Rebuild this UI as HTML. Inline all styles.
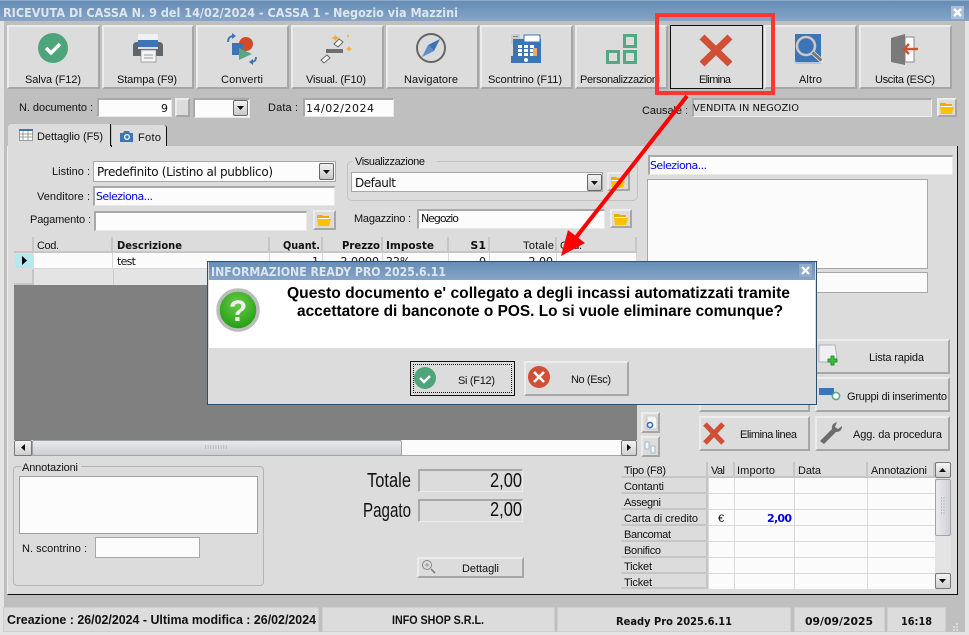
<!DOCTYPE html>
<html><head><meta charset="utf-8"><title>Ricevuta di cassa</title>
<style>
html,body{margin:0;padding:0;width:969px;height:635px;overflow:hidden;background:#bfbfbf}
.l{position:absolute;left:0;top:0;width:969px;height:635px}
.d{position:absolute;box-sizing:border-box}
.b{background:#dcdcdc;border:2px solid;border-color:#ececec #a6a6a6 #a6a6a6 #ececec}
.i{background:#fcfcfc;border:1px solid #a8a8a8;border-bottom-color:#e8e8e8;border-right-color:#e8e8e8;border-top-width:2px;border-left-width:2px}
.g{background:#dcdcdc;border:1px solid #a8a8a8;border-bottom-color:#ececec;border-right-color:#ececec;border-top-width:2px;border-left-width:2px}
.h{background:#dcdcdc;border-right:2px solid #c6c6c6;border-bottom:2px solid #c6c6c6}
.c{background:#fbfbfb;border-right:1px solid #d8d8d8;border-bottom:1px solid #d8d8d8}
svg{position:absolute;left:0;top:0}
text{font-family:"Liberation Sans",sans-serif;font-size:11px;fill:#111}
.v{font-family:"DejaVu Sans",sans-serif;font-size:11px}
.vb{font-family:"DejaVu Sans",sans-serif;font-size:11px;font-weight:bold}
.t{font-family:"DejaVu Sans",sans-serif;font-weight:bold;font-size:12px;fill:#dde5ef}
.m{font-family:"Liberation Sans",sans-serif;font-weight:bold;font-size:16px;fill:#000}
.big{font-size:20px}
.bl{fill:#0000ee}
.e{text-anchor:end}
</style></head><body>
<div class="l">
<!-- titlebar -->
<div class="d" style="left:0;top:0;width:969px;height:21px;background:linear-gradient(#668db6,#86a5c7);border-top:1px solid #8fa9c6"></div>
<div class="d" style="left:0;top:21px;width:969px;height:614px;background:#bfbfbf;border-left:4px solid #e4e4e4;border-right:4px solid #e4e4e4;border-bottom:3px solid #e4e4e4"></div>
<div class="d" style="left:951px;top:6px;width:13px;height:13px;background:#a9bfd8"></div>
<!-- toolbar buttons -->
<div class="d b" style="left:7px;top:25px;width:93px;height:64px"></div>
<div class="d b" style="left:102px;top:25px;width:92px;height:64px"></div>
<div class="d b" style="left:196px;top:25px;width:93px;height:64px"></div>
<div class="d b" style="left:291px;top:25px;width:93px;height:64px"></div>
<div class="d b" style="left:386px;top:25px;width:93px;height:64px"></div>
<div class="d b" style="left:480px;top:25px;width:93px;height:64px"></div>
<div class="d b" style="left:575px;top:25px;width:93px;height:64px"></div>
<div class="d" style="left:670px;top:25px;width:93px;height:64px;background:#dcdcdc;border:1px solid #111"></div>
<div class="d b" style="left:764px;top:25px;width:93px;height:64px"></div>
<div class="d b" style="left:859px;top:25px;width:93px;height:64px"></div>
<!-- top fields -->
<div class="d i" style="left:97px;top:98px;width:75px;height:19px"></div>
<div class="d b" style="left:175px;top:98px;width:15px;height:19px"></div>
<div class="d i" style="left:193px;top:98px;width:57px;height:20px"></div>
<div class="d b" style="left:233px;top:100px;width:15px;height:16px;border:1px solid #666;border-radius:2px;background:linear-gradient(#f2f2f2,#c8c8c8)"></div>
<div class="d i" style="left:303px;top:98px;width:91px;height:19px"></div>
<div class="d g" style="left:692px;top:98px;width:240px;height:19px"></div>
<div class="d b" style="left:937px;top:98px;width:20px;height:19px"></div>
<!-- panel -->
<div class="d" style="left:8px;top:124px;width:103px;height:23px;background:#dcdcdc;border-right:1px solid #111;border-radius:3px 0 0 0"></div>
<div class="d" style="left:112px;top:125px;width:55px;height:21px;background:#dcdcdc;border-right:1px solid #111;border-radius:0 3px 0 0"></div>
<div class="d" style="left:7px;top:146px;width:951px;height:449px;background:#dcdcdc;border-right:1px solid #111;border-bottom:1px solid #111;border-left:1px solid #ececec"></div>
<div class="d" style="left:7px;top:146px;width:1px;height:448px;background:#ececec"></div>
<div class="d" style="left:111px;top:145px;width:1px;height:2px;background:#111"></div>
<!-- form -->
<div class="d i" style="left:93px;top:161px;width:243px;height:21px;border-width:1px;border-color:#a8a8a8"></div>
<div class="d" style="left:319px;top:163px;width:15px;height:17px;border:1px solid #666;border-radius:2px;background:linear-gradient(#f2f2f2,#c8c8c8)"></div>
<div class="d i" style="left:93px;top:186px;width:242px;height:20px"></div>
<div class="d i" style="left:94px;top:211px;width:213px;height:20px"></div>
<div class="d b" style="left:313px;top:210px;width:23px;height:20px"></div>
<div class="d" style="left:347px;top:161px;width:291px;height:40px;border:1px solid #c2c2c2;border-radius:5px"></div>
<div class="d" style="left:353px;top:156px;width:84px;height:12px;background:#dcdcdc"></div>
<div class="d i" style="left:351px;top:172px;width:252px;height:20px;border-width:1px;border-color:#a8a8a8"></div>
<div class="d" style="left:587px;top:174px;width:15px;height:17px;border:1px solid #666;border-radius:2px;background:linear-gradient(#f2f2f2,#c8c8c8)"></div>
<div class="d b" style="left:607px;top:172px;width:23px;height:19px"></div>
<div class="d i" style="left:417px;top:209px;width:188px;height:20px"></div>
<div class="d b" style="left:610px;top:209px;width:22px;height:19px"></div>
<div class="d i" style="left:648px;top:155px;width:305px;height:20px"></div>
<div class="d" style="left:647px;top:179px;width:281px;height:90px;background:#fbfbfb;border:1px solid #a8a8a8"></div>
<div class="d" style="left:647px;top:272px;width:281px;height:21px;background:#fbfbfb;border:1px solid #a8a8a8"></div>
<!-- grid -->
<div class="d" style="left:14px;top:237px;width:623px;height:203px;background:#808080"></div>
<div class="d h" style="left:14px;top:237px;width:20px;height:16px"></div>
<div class="d h" style="left:34px;top:237px;width:79px;height:16px"></div>
<div class="d h" style="left:113px;top:237px;width:157px;height:16px"></div>
<div class="d h" style="left:270px;top:237px;width:53px;height:16px"></div>
<div class="d h" style="left:323px;top:237px;width:60px;height:16px"></div>
<div class="d h" style="left:383px;top:237px;width:66px;height:16px"></div>
<div class="d h" style="left:449px;top:237px;width:41px;height:16px"></div>
<div class="d h" style="left:490px;top:237px;width:67px;height:16px"></div>
<div class="d h" style="left:557px;top:237px;width:80px;height:16px"></div>
<div class="d" style="left:14px;top:253px;width:20px;height:16px;background:#b5e8ee;border:1px solid #ddd"></div>
<div class="d h" style="left:14px;top:269px;width:20px;height:16px"></div>
<div class="d c" style="left:34px;top:253px;width:79px;height:16px"></div>
<div class="d c" style="left:113px;top:253px;width:157px;height:16px"></div>
<div class="d c" style="left:270px;top:253px;width:53px;height:16px"></div>
<div class="d c" style="left:323px;top:253px;width:60px;height:16px"></div>
<div class="d c" style="left:383px;top:253px;width:66px;height:16px"></div>
<div class="d c" style="left:449px;top:253px;width:41px;height:16px"></div>
<div class="d c" style="left:490px;top:253px;width:67px;height:16px"></div>
<div class="d c" style="left:557px;top:253px;width:80px;height:16px"></div>
<div class="d" style="left:34px;top:269px;width:603px;height:16px;background:#e4e4e4"></div>
<div class="d" style="left:113px;top:269px;width:1px;height:16px;background:#ccc"></div>
<!-- grid scrollbar -->
<div class="d" style="left:14px;top:440px;width:623px;height:16px;background:#fbfbfb;border-bottom:1px solid #a8a8a8"></div>
<div class="d" style="left:14px;top:440px;width:18px;height:16px;border:1px solid #777;border-radius:2px;background:linear-gradient(#f2f2f2,#cfcfcf)"></div>
<div class="d" style="left:32px;top:440px;width:370px;height:16px;background:linear-gradient(#e8e8ec,#cdcfd4);border:1px solid #a2a2a6;border-radius:2px"></div>
<div class="d" style="left:621px;top:440px;width:16px;height:16px;border:1px solid #777;border-radius:2px;background:linear-gradient(#f2f2f2,#cfcfcf)"></div>
<!-- side buttons -->
<div class="d b" style="left:699px;top:339px;width:111px;height:35px"></div>
<div class="d b" style="left:699px;top:377px;width:111px;height:35px"></div>
<div class="d b" style="left:699px;top:416px;width:111px;height:35px"></div>
<div class="d b" style="left:815px;top:339px;width:135px;height:35px"></div>
<div class="d b" style="left:815px;top:377px;width:135px;height:35px"></div>
<div class="d b" style="left:815px;top:416px;width:135px;height:35px"></div>
<div class="d b" style="left:641px;top:412px;width:19px;height:21px"></div>
<div class="d b" style="left:641px;top:436px;width:19px;height:21px"></div>
<!-- bottom left -->
<div class="d" style="left:13px;top:466px;width:251px;height:120px;border:1px solid #b4b4b4;border-radius:4px"></div>
<div class="d" style="left:21px;top:460px;width:60px;height:12px;background:#dcdcdc"></div>
<div class="d" style="left:19px;top:476px;width:239px;height:58px;background:#fcfcfc;border:1px solid #a0a0a0"></div>
<div class="d" style="left:95px;top:537px;width:105px;height:21px;background:#fcfcfc;border:1px solid #a8a8a8"></div>
<div class="d g" style="left:418px;top:469px;width:105px;height:23px"></div>
<div class="d g" style="left:418px;top:499px;width:105px;height:23px"></div>
<div class="d b" style="left:417px;top:557px;width:107px;height:21px"></div>
<!-- payments table -->
<div class="d h" style="left:621px;top:462px;width:87px;height:16px"></div>
<div class="d h" style="left:708px;top:462px;width:27px;height:16px"></div>
<div class="d h" style="left:735px;top:462px;width:60px;height:16px"></div>
<div class="d h" style="left:795px;top:462px;width:73px;height:16px"></div>
<div class="d h" style="left:868px;top:462px;width:67px;height:16px"></div>
<div class="d h" style="left:621px;top:478px;width:87px;height:16px"></div>
<div class="d h" style="left:621px;top:494px;width:87px;height:16px"></div>
<div class="d h" style="left:621px;top:510px;width:87px;height:16px"></div>
<div class="d h" style="left:621px;top:526px;width:87px;height:16px"></div>
<div class="d h" style="left:621px;top:542px;width:87px;height:16px"></div>
<div class="d h" style="left:621px;top:558px;width:87px;height:16px"></div>
<div class="d h" style="left:621px;top:574px;width:87px;height:15px"></div>
<svg width="969" height="635">
<rect x="708" y="478" width="227" height="111" fill="#fbfbfb"/>
<g stroke="#dadada" stroke-width="1">
<path d="M708.5 478V589M734.5 478V589M794.5 478V589M867.5 478V589M708 493.5H935M708 509.5H935M708 525.5H935M708 541.5H935M708 557.5H935M708 573.5H935"/>
</g>
</svg>
<div class="d" style="left:935px;top:462px;width:16px;height:127px;background:#e4e4e4"></div>
<div class="d" style="left:935px;top:462px;width:16px;height:16px;border:1px solid #777;border-radius:2px;background:linear-gradient(#f4f4f4,#cfcfcf)"></div>
<div class="d" style="left:935px;top:479px;width:16px;height:57px;background:linear-gradient(90deg,#eaeaee,#cfd0d6);border:1px solid #a2a2a6;border-radius:2px"></div>
<div class="d" style="left:935px;top:573px;width:16px;height:16px;border:1px solid #777;border-radius:2px;background:linear-gradient(#f4f4f4,#cfcfcf)"></div>
<!-- status -->
<div class="d" style="left:3px;top:607px;width:316px;height:25px;background:#dcdcdc;border:1px solid #cfcfcf"></div>
<div class="d" style="left:322px;top:607px;width:233px;height:25px;background:#dcdcdc;border:1px solid #cfcfcf"></div>
<div class="d" style="left:557px;top:607px;width:234px;height:25px;background:#dcdcdc;border:1px solid #cfcfcf"></div>
<div class="d" style="left:794px;top:607px;width:91px;height:25px;background:#dcdcdc;border:1px solid #cfcfcf"></div>
<div class="d" style="left:887px;top:607px;width:59px;height:25px;background:#dcdcdc;border:1px solid #cfcfcf"></div>

<svg width="969" height="635">
<defs>
<g id="f"><path d="M0 2h5l1 1h6v2H0z" fill="#f2a800"/><path d="M1 5h11v1H1z" fill="#fff"/><path d="M0 6h14l-2 7H1z" fill="#ffc107"/></g>
<path id="dn" d="M0 0h7l-3.500 4z" fill="#111"/>
</defs>
<text class="t" x="3" y="17" textLength="455" lengthAdjust="spacingAndGlyphs">RICEVUTA DI CASSA N. 9 del 14/02/2024 - CASSA 1 - Negozio via Mazzini</text>
<path d="M954 9l7 7M961 9l-7 7" stroke="#fff" stroke-width="2.400"/>
<!-- toolbar labels -->
<text x="25" y="83" textLength="56">Salva (F12)</text>
<text x="117" y="83" textLength="60">Stampa (F9)</text>
<text x="221" y="83" textLength="42">Converti</text>
<text x="306" y="83" textLength="60">Visual. (F10)</text>
<text x="404" y="83" textLength="54">Navigatore</text>
<text x="488" y="83" textLength="74">Scontrino (F11)</text>
<text x="580" y="83" textLength="80">Personalizzazioni</text>
<text x="699" y="83" textLength="32">Elimina</text>
<text x="799" y="83" textLength="23">Altro</text>
<text x="875" y="83" textLength="60">Uscita (ESC)</text>
<!-- Salva -->
<circle cx="53" cy="48" r="15" fill="#4ea57c"/><path d="M46 48l5 5 9-9" fill="none" stroke="#fff" stroke-width="3.400"/>
<!-- Stampa -->
<path d="M138 34h20v8h-20z" fill="#f0f0f0"/><path d="M138 40h20v7h-20z" fill="#3c74b5"/>
<path d="M133 46q0-4 4-4h1v7h20v-7h1q4 0 4 4v10h-30z" fill="#5e666c"/>
<rect x="141" y="50" width="15" height="12" fill="#f4f4f4" stroke="#888" stroke-width=".7"/><path d="M144 55h9M144 58h9" stroke="#999"/>
<!-- Converti -->
<circle cx="246" cy="44" r="7" fill="#d24a2b"/><rect x="232" y="43" width="11" height="12" fill="#3c74b5"/><path d="M239 48l13 6-13 6z" fill="#55a882"/>
<path d="M228 42q0-6 6-6" fill="none" stroke="#3c74b5" stroke-width="1.800"/><path d="M232 33l4 3-4 3z" fill="#3c74b5"/>
<path d="M256 57q0 5-5 5" fill="none" stroke="#3c74b5" stroke-width="1.800"/><path d="M253 59l-4 3 4 3z" fill="#3c74b5"/>
<!-- Visual -->
<rect x="326" y="49" width="17" height="4" fill="#6e6e6e"/>
<path d="M339 39l4 3 -5 5-4-3zM327 55l3 3-6 5-3-3z" fill="#f5f5f5" stroke="#666"/>
<path d="M335 35l2 2 3 1-3 1-2 2-1-2-3-1 3-1zM348 34l1 2-1 2-1-2zM349 46l1 2 2 1-2 1-1 2-1-2-2-1 2-1z" fill="#f1ad3c"/>
<!-- Navigatore -->
<circle cx="431" cy="48" r="14" fill="none" stroke="#666" stroke-width="2"/>
<path d="M440 39l-6 12-6-6z" fill="#3c74b5"/><path d="M422 57l6-12 6 6z" fill="#5f8dc8"/>
<!-- Scontrino -->
<rect x="511" y="34" width="9" height="10" fill="#ccc"/><rect x="513" y="36" width="5" height="1" fill="#888"/>
<rect x="513" y="39" width="28" height="20" fill="#3c74b5"/><rect x="524" y="35" width="16" height="7" fill="#fff" stroke="#3c74b5"/>
<path d="M518 45h4v3h-4zM524 45h4v3h-4zM530 45h4v3h-4zM518 49h4v3h-4zM524 49h4v3h-4zM530 49h4v3h-4zM518 53h4v3h-4zM524 53h4v3h-4zM530 53h4v3h-4z" fill="#fff"/>
<rect x="533" y="48" width="4" height="8" fill="#e9ab5c"/>
<rect x="511" y="56" width="30" height="7" fill="#3c74b5"/><circle cx="526" cy="60" r="2" fill="#fff"/>
<!-- Personalizzazioni -->
<g fill="none" stroke="#55a882" stroke-width="3"><rect x="607.500" y="51.500" width="11" height="11"/><rect x="624.500" y="35.500" width="11" height="11"/><rect x="624.500" y="51.500" width="11" height="11"/></g>
<!-- Elimina -->
<path d="M702 37l28 27M730 37l-28 27" stroke="#d04f35" stroke-width="7"/>
<!-- Altro -->
<path d="M795 34h26v28h-24q-2 0-2-2z" fill="#3c74b5"/><path d="M795 60q0 3 2 3h24" fill="none" stroke="#8fb0d0"/>
<circle cx="806" cy="46" r="9" fill="#3c74b5" stroke="#c8c8c8" stroke-width="2.600"/><path d="M812.500 52.500l10 9" stroke="#ececec" stroke-width="4.500"/><path d="M812.500 52.500l9 8" stroke="#777" stroke-width="3"/>
<!-- Uscita -->
<rect x="905" y="37" width="9" height="25" fill="#fff" stroke="#888"/><path d="M891 38l14-4v31l-14-3z" fill="#7a7a7a"/>
<path d="M904 49h14" stroke="#d04f35" stroke-width="2.400"/><path d="M909 44l-5 5 5 5" fill="none" stroke="#d04f35" stroke-width="2.400"/>
<!-- top labels -->
<text x="19" y="111" textLength="74">N. documento :</text>
<text x="168" y="112" class="v e">9</text>
<use href="#dn" x="237" y="106"/>
<text x="268" y="111" textLength="30">Data :</text>
<text x="306" y="112" class="v" textLength="68">14/02/2024</text>
<text x="642" y="114" textLength="46">Causale :</text>
<text x="693" y="111" class="v" textLength="106" style="font-size:10px" lengthAdjust="spacingAndGlyphs">VENDITA IN NEGOZIO</text>
<use href="#f" x="940" y="101"/>
<!-- tabs -->
<g fill="none" stroke="#888" stroke-width=".8"><rect x="19.500" y="130.500" width="13" height="10" fill="#fff"/><path d="M19 134h14M19 137h14M23 131v9M28 131v9"/></g><rect x="19" y="129" width="14" height="2" fill="#3c74b5"/>
<text x="37" y="140" textLength="66">Dettaglio (F5)</text>
<path d="M120 133h3l1-2h5l1 2h3v9h-13z" fill="#3c74b5"/><circle cx="127" cy="137" r="3" fill="#fff"/><circle cx="127" cy="137" r="1.700" fill="#3c74b5"/>
<text x="138" y="141" textLength="23">Foto</text>
<!-- form -->
<text x="52" y="175" textLength="38">Listino :</text>
<text x="97" y="176" class="v" style="font-size:12px" textLength="176">Predefinito (Listino al pubblico)</text>
<use href="#dn" x="323" y="170"/>
<text x="37" y="200" textLength="53">Venditore :</text>
<text x="96" y="200" class="v bl" textLength="57">Seleziona...</text>
<text x="30" y="223" textLength="61">Pagamento :</text>
<use href="#f" x="317" y="213"/>
<text x="355" y="165" textLength="70">Visualizzazione</text>
<text x="355" y="187" class="v" style="font-size:12px" textLength="41">Default</text>
<use href="#dn" x="591" y="181"/>
<use href="#f" x="611" y="175"/>
<text x="354" y="222" textLength="57">Magazzino :</text>
<text x="421" y="222" class="v" textLength="38">Negozio</text>
<use href="#f" x="614" y="212"/>
<text x="650" y="169" class="v bl" textLength="57">Seleziona...</text>
<!-- grid text -->
<text x="37" y="249" textLength="22">Cod.</text>
<text x="117" y="249" class="vb" textLength="65" lengthAdjust="spacingAndGlyphs">Descrizione</text>
<text x="320" y="249" class="vb e" textLength="37" lengthAdjust="spacingAndGlyphs">Quant.</text>
<text x="380" y="249" class="vb e" textLength="38" lengthAdjust="spacingAndGlyphs">Prezzo</text>
<text x="386" y="249" class="vb" textLength="48" lengthAdjust="spacingAndGlyphs">Imposte</text>
<text x="486" y="249" class="vb e">S1</text>
<text x="554" y="249" class="e" textLength="31">Totale</text>
<text x="560" y="249" textLength="22">Cod.</text>
<path d="M22 256l5 4.500-5 4.500z" fill="#000"/>
<text x="117" y="265" class="v" textLength="19">test</text>
<text x="319" y="265" class="v e">1</text>
<text x="379" y="265" class="v e">2,0000</text>
<text x="386" y="265" class="v">22%</text>
<text x="486" y="265" class="v e">0</text>
<text x="553" y="265" class="v e">2,00</text>
<!-- scrollbars -->
<path d="M25 444v7l-4-3.500z" fill="#111"/><path d="M627 444v7l4-3.500z" fill="#111"/>
<path d="M205 446h22M205 448h22" stroke="#999" stroke-dasharray="1 1.600"/>
<!-- side -->
<path d="M819 345h16l2 12-3 5h-15z" fill="#f0f0f4" stroke="#b0b0b4"/><path d="M831 356h3v3h3v3h-3v3h-3v-3h-3v-3h3z" fill="#3fbf3f" stroke="#187a18" stroke-width=".8"/>
<text x="869" y="361" textLength="55">Lista rapida</text>
<rect x="819" y="388" width="15" height="7" fill="#3c74b5"/><circle cx="836" cy="396" r="3.600" fill="#fff" stroke="#55a882" stroke-width="1.500"/>
<text x="847" y="400" textLength="100">Gruppi di inserimento</text>
<path d="M705 424l18 19M723 424l-18 19" stroke="#d04f35" stroke-width="5"/>
<text x="740" y="438" textLength="57">Elimina linea</text>
<path d="M820 441l12-12q-1-5 5-7l-2 5 3 2 4-3q0 6-6 6l-12 12z" fill="#6c6c6c"/>
<text x="853" y="438" textLength="89">Agg. da procedura</text>
<path d="M647 416h8l2 3v10h-10z" fill="#f4f4f4" stroke="#c8c8c8"/><circle cx="650" cy="425" r="2.600" fill="none" stroke="#3c74b5" stroke-width="1.600"/>
<path d="M645 442h4v7h-4zM651 446h4v7h-4z" fill="#f4f4f4" stroke="#8fb0d0" stroke-width=".8"/>
<!-- bottom left -->
<text x="22" y="471" textLength="56">Annotazioni</text>
<text x="22" y="552" textLength="65">N. scontrino :</text>
<text x="411" y="487" class="big e" textLength="44" lengthAdjust="spacingAndGlyphs">Totale</text>
<text x="411" y="517" class="big e" textLength="48" lengthAdjust="spacingAndGlyphs">Pagato</text>
<text x="522" y="487" class="big e" textLength="32" lengthAdjust="spacingAndGlyphs">2,00</text>
<text x="522" y="516" class="big e" textLength="32" lengthAdjust="spacingAndGlyphs">2,00</text>
<circle cx="427" cy="565" r="4.500" fill="none" stroke="#888"/><path d="M431 569l4 4" stroke="#777" stroke-width="1.500"/><path d="M425 565h4M427 563v4" stroke="#888" stroke-width=".8"/>
<text x="462" y="572" textLength="37">Dettagli</text>
<!-- payments -->
<text x="624" y="474" textLength="42">Tipo (F8)</text>
<text x="711" y="474" textLength="14">Val</text>
<text x="737" y="474" textLength="38">Importo</text>
<text x="798" y="474" textLength="23">Data</text>
<text x="871" y="474" textLength="56">Annotazioni</text>
<text x="624" y="490" textLength="40">Contanti</text>
<text x="624" y="506" textLength="37">Assegni</text>
<text x="624" y="522" textLength="74">Carta di credito</text>
<text x="624" y="538" textLength="47">Bancomat</text>
<text x="624" y="554" textLength="37">Bonifico</text>
<text x="624" y="570" textLength="28">Ticket</text>
<text x="624" y="586" textLength="28">Ticket</text>
<text x="718" y="522" textLength="6">€</text>
<text x="792" y="522" class="vb e" style="fill:#0000ee" textLength="25">2,00</text>
<path d="M939 472h7l-3.500-4z" fill="#111"/><path d="M939 579h7l-3.500 4z" fill="#111"/>
<path d="M941 498h5M941 501h5M941 504h5M941 507h5M941 510h5M941 513h5" stroke="#a0a0a0" stroke-dasharray="1 1.500"/>
<!-- status text -->
<text x="7" y="624" style="font-weight:bold;font-size:13px" textLength="309" lengthAdjust="spacingAndGlyphs">Creazione : 26/02/2024 - Ultima modifica : 26/02/2024</text>
<text x="392" y="624" style="font-weight:bold;font-size:12px" textLength="92" lengthAdjust="spacingAndGlyphs">INFO SHOP S.R.L.</text>
<text x="616" y="625" class="vb" textLength="116" lengthAdjust="spacingAndGlyphs">Ready Pro 2025.6.11</text>
<text x="805" y="625" class="vb" textLength="68" lengthAdjust="spacingAndGlyphs">09/09/2025</text>
<text x="901" y="625" class="vb" textLength="31" lengthAdjust="spacingAndGlyphs">16:18</text>
<path d="M953 630h2M956 630h2M956 627h2M956 624h2M953 627h2" stroke="#f4f4f4"/>
</svg>

<!-- dialog -->
<div class="d" style="left:207px;top:261px;width:610px;height:144px;background:#dcdcdc;border:1px solid #2f4f6f"></div>
<div class="d" style="left:209px;top:262px;width:606px;height:18px;background:linear-gradient(#668db6,#86a5c7)"></div>
<div class="d" style="left:209px;top:280px;width:606px;height:68px;background:#fff"></div>
<div class="d" style="left:410px;top:361px;width:105px;height:35px;background:#dcdcdc;border:1px solid #111;outline:1px dotted #111;outline-offset:-4px"></div>
<div class="d b" style="left:524px;top:361px;width:105px;height:35px"></div>
<div class="d" style="left:799px;top:264px;width:13px;height:13px;background:#8fabc9"></div>
<svg width="969" height="635">
<defs><radialGradient id="gq" cx=".5" cy=".35" r=".7"><stop offset="0" stop-color="#6cc94a"/><stop offset="1" stop-color="#189a0c"/></radialGradient></defs>
<text x="211" y="276" class="t" textLength="235" lengthAdjust="spacingAndGlyphs">INFORMAZIONE READY PRO 2025.6.11</text>
<path d="M802 267l7 7M809 267l-7 7" stroke="#fff" stroke-width="2.200"/>
<circle cx="238" cy="310" r="20" fill="url(#gq)" stroke="#bcbcbc" stroke-width="3.500"/>
<text x="238" y="321" text-anchor="middle" style="font-size:30px;font-weight:bold;fill:#f0f0f0">?</text>
<text class="m" x="287" y="298" textLength="503" lengthAdjust="spacingAndGlyphs">Questo documento e' collegato a degli incassi automatizzati tramite</text>
<text class="m" x="297" y="316" textLength="486" lengthAdjust="spacingAndGlyphs">accettatore di banconote o POS. Lo si vuole eliminare comunque?</text>
<circle cx="425" cy="378" r="11" fill="#4ea57c"/><path d="M420 378l4 4 6-6" fill="none" stroke="#fff" stroke-width="2.400"/>
<text x="458" y="384" textLength="37">Si (F12)</text>
<circle cx="539" cy="377" r="11" fill="#d04f35"/><path d="M534 372l10 10M544 372l-10 10" stroke="#fff" stroke-width="2.600"/>
<text x="571" y="383" textLength="40">No (Esc)</text>
</svg>

<!-- annotation -->
<svg width="969" height="635">
<rect x="657" y="15" width="116" height="78" fill="none" stroke="#ff3535" stroke-width="4"/>
<path d="M687 96L574 240" stroke="#ff0000" stroke-width="4" fill="none"/>
<path d="M561 256l7-26 17 13z" fill="#ff0000"/>
</svg>
</div>
</body></html>
